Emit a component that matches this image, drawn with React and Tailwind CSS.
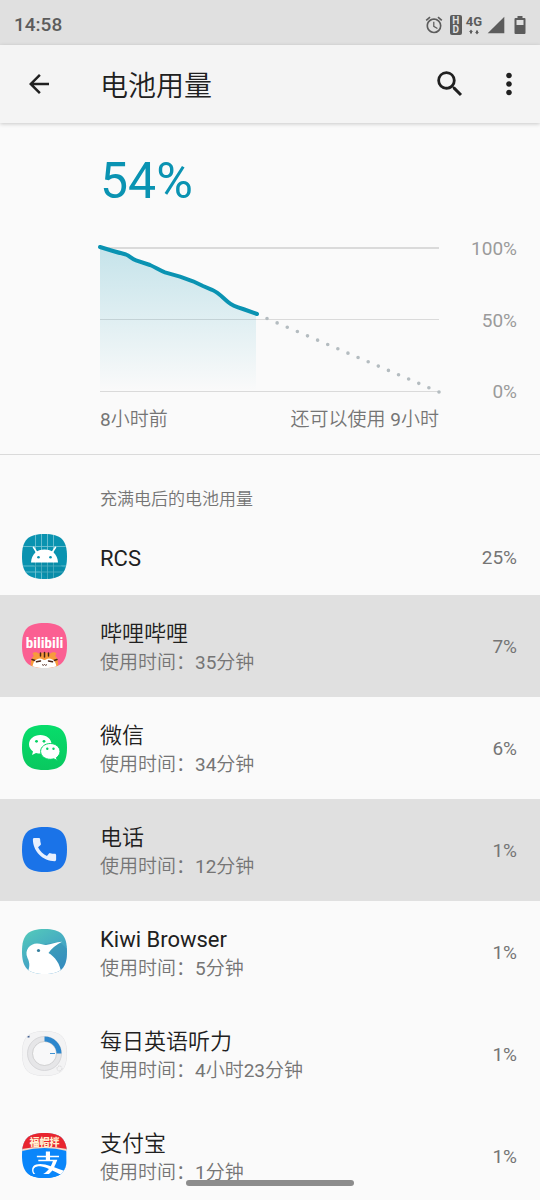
import React from 'react';
import { MdAlarm, MdArrowBack, MdCall, MdMoreVert, MdSearch, MdSignalCellular4Bar } from 'react-icons/md';
import { FaAlipay } from 'react-icons/fa';

const SQUIRCLE = 'M22.5 0C39 0 45 6 45 22.5S39 45 22.5 45 0 39 0 22.5 6 0 22.5 0Z';

function AppIcon({ id, children }) {
  return (
    <svg viewBox="0 0 45 45" className="w-[45px] h-[45px] mb-0.5 shrink-0" aria-hidden="true">
      <clipPath id={`clip-${id}`}>
        <path d={SQUIRCLE} />
      </clipPath>
      <g clipPath={`url(#clip-${id})`}>{children}</g>
    </svg>
  );
}

function RcsIcon() {
  return (
    <AppIcon id="rcs">
      <rect width="45" height="45" fill="#0a93b0" />
      <path
        d="M13.5 0V45M19.5 0V45M25.5 0V45M31.5 0V45M0 12.5H45M0 32H45M0 38H45"
        stroke="#7cc6d6"
        strokeWidth="0.8"
        fill="none"
      />
      <path d="M9 28.500h27l9 9V45H26Z" fill="#06809b" opacity="0.35" />
      <path d="M9 28.500C9.500 20 15 15.500 22.500 15.500S35.500 20 36 28.500Z" fill="#fff" />
      <path d="M14.500 18 11.500 13.300M30.500 18 33.500 13.300" stroke="#fff" strokeWidth="1.600" strokeLinecap="round" />
      <circle cx="16.500" cy="23.300" r="1.300" fill="#0a93b0" />
      <circle cx="28.500" cy="23.300" r="1.300" fill="#0a93b0" />
    </AppIcon>
  );
}

function BilibiliIcon() {
  return (
    <AppIcon id="bili">
      <rect width="45" height="45" fill="#fb5f92" />
      <text
        x="22.500"
        y="25"
        textAnchor="middle"
        fontSize="15"
        fontWeight="700"
        fill="#fff"
        className="font-['Roboto_Condensed',Roboto,sans-serif]"
      >
        bilibili
      </text>
      <path d="M9 45C8 38 10 34 12 33L10.500 30.500C12 28.800 15 29 16.500 30.500 20 29.300 25 29.300 28.500 30.500 30 29 33 28.800 34.500 30.500L33 33C35 34 37 38 36 45Z" fill="#f79a3c" />
      <path d="M22.500 29.500V34M18.500 30V33M26.500 30V33M10 36.500 13 37.500M35 36.500 32 37.500" stroke="#4a2417" strokeWidth="1.500" strokeLinecap="round" />
      <path d="M10.500 45C10.500 39 14 35.500 18 35.500 20 35.500 21 37 22.500 37S25 35.500 27 35.500C31 35.500 34.500 39 34.500 45Z" fill="#fff" />
      <path d="M14.500 38.800 18.500 38M26.500 38 30.500 38.800" stroke="#4a2417" strokeWidth="1.500" strokeLinecap="round" />
      <path d="M20 41.500Q21.300 43.200 22.500 41.500 23.700 43.200 25 41.500" stroke="#4a2417" strokeWidth="0.900" fill="none" />
    </AppIcon>
  );
}

function WechatIcon() {
  return (
    <AppIcon id="wechat">
      <linearGradient id="wechat-bg" x1="0" y1="0" x2="0" y2="1">
        <stop offset="0" stopColor="#07dd6b" />
        <stop offset="1" stopColor="#09c85f" />
      </linearGradient>
      <rect width="45" height="45" fill="url(#wechat-bg)" />
      <path d="M18.300 10C12 10 7 14 7 19.300c0 3 1.600 5.500 4 7.200l-1 3.500 4-2.100c1.400.4 2.800.6 4.300.6 6.300 0 11.300-4 11.300-9.200S24.600 10 18.300 10Z" fill="#fff" />
      <path d="M28.300 18.500c-5.400 0-9.700 3.500-9.700 7.900s4.300 7.900 9.700 7.900c1.200 0 2.400-.2 3.500-.5l3.500 1.700-.9-2.900c2.200-1.500 3.600-3.700 3.600-6.200 0-4.400-4.300-7.900-9.700-7.900Z" fill="#fff" stroke="#08d265" strokeWidth="1" />
      <circle cx="14.500" cy="16.300" r="1.400" fill="#08d265" />
      <circle cx="22" cy="16.300" r="1.400" fill="#08d265" />
      <circle cx="25.300" cy="23.800" r="1.200" fill="#08d265" />
      <circle cx="31.500" cy="23.800" r="1.200" fill="#08d265" />
    </AppIcon>
  );
}

function PhoneIcon() {
  return (
    <AppIcon id="phone">
      <rect width="45" height="45" fill="#1a73e8" />
      <MdCall x="7" y="7" size={31} color="#e8f0fe" />
    </AppIcon>
  );
}

function KiwiIcon() {
  return (
    <AppIcon id="kiwi">
      <linearGradient id="kiwi-bg" x1="0" y1="0" x2="0.600" y2="1">
        <stop offset="0" stopColor="#55ccba" />
        <stop offset="1" stopColor="#3a93c8" />
      </linearGradient>
      <rect width="45" height="45" fill="url(#kiwi-bg)" />
      <path d="M22 15 38 13 45 20V45H37Z" fill="#2f83ad" opacity="0.350" />
      <path d="M5 45C8 38 8 34 5.500 29 2 21 8 14.500 15 14.500 19 14.500 21 16 24 16 29 15.500 34 13 40 12.800 34 16 29 20 26.500 24 33 28 38 34 39.500 45Z" fill="#fff" />
      <circle cx="16.500" cy="21.500" r="1.600" fill="#37809f" />
    </AppIcon>
  );
}

function ListeningIcon() {
  return (
    <AppIcon id="listening">
      <path d={SQUIRCLE} fill="#f3f3f4" stroke="#e2e2e4" strokeWidth="1" />
      <circle cx="22.500" cy="22.500" r="14.500" fill="none" stroke="#e6e6e8" strokeWidth="5" />
      <circle cx="22.500" cy="22.500" r="17" fill="none" stroke="#cfcfd1" strokeWidth="0.700" />
      <circle cx="22.500" cy="22.500" r="12" fill="#f8f8f9" stroke="#c0c0c2" strokeWidth="0.700" />
      <path d="M22.500 8A14.500 14.500 0 0 1 37 22.500" fill="none" stroke="#2d87cd" strokeWidth="5" />
      <path d="M28 22.500H33" stroke="#2d87cd" strokeWidth="0.900" />
      <path d="M5.500 6.500V5.500L7.500 4.500V6.500Z" fill="#3b5a8c" />
      <circle cx="37.500" cy="37.500" r="2.500" fill="none" stroke="#d2d2d4" strokeWidth="1" strokeDasharray="1.500 1" />
    </AppIcon>
  );
}

function AlipayIcon() {
  return (
    <AppIcon id="alipay">
      <rect width="45" height="45" fill="#0a86fa" />
      <rect x="9" y="17" width="36" height="24" fill="#fff" />
      <FaAlipay x="5" y="11" size={42} color="#0a86fa" />
      <path d="M0 0H45V18Q22.500 12 0 18Z" fill="#f7d9c8" />
      <path d="M0 0H45V16Q22.500 11.500 0 16Z" fill="#e8252f" />
      <text
        x="22.500"
        y="13"
        textAnchor="middle"
        fontSize="10"
        fontWeight="900"
        fill="#fff0d0"
        className="font-['Noto_Sans_CJK_SC',sans-serif]"
      >
        福帽拌
      </text>
    </AppIcon>
  );
}

const apps = [
  { name: '哔哩哔哩', time: '35分钟', percent: '7%', icon: BilibiliIcon, active: true },
  { name: '微信', time: '34分钟', percent: '6%', icon: WechatIcon },
  { name: '电话', time: '12分钟', percent: '1%', icon: PhoneIcon, active: true },
  { name: 'Kiwi Browser', time: '5分钟', percent: '1%', icon: KiwiIcon },
  { name: '每日英语听力', time: '4小时23分钟', percent: '1%', icon: ListeningIcon },
  { name: '支付宝', time: '1分钟', percent: '1%', icon: AlipayIcon },
];

function StatusBar() {
  return (
    <div className="flex items-center justify-between h-[45px] shrink-0 pl-3.5 pr-3.5 pt-1 bg-[#e0e0e0] text-[#5c5c5c]">
      <span className="text-[19px] leading-6 font-medium">14:58</span>
      <div className="flex items-center gap-1">
        <MdAlarm className="w-5 h-5" />
        <div className="flex flex-col items-center justify-center w-3 h-5 ml-0.5 rounded-xs bg-[#5c5c5c] text-[#e0e0e0] text-[10px] leading-[9px] font-bold">
          <span>H</span>
          <span>D</span>
        </div>
        <div className="flex flex-col items-center">
          <span className="text-[13px] leading-[14px] font-bold">4G</span>
          <svg viewBox="0 0 12 6" className="w-3 h-1.5">
            <path d="M3 .5 5 3H4V4.500H2V3H1ZM9 5.500 7 3H8V1.500H10V3H11Z" fill="currentColor" />
          </svg>
        </div>
        <MdSignalCellular4Bar className="w-5 h-5" />
        <svg viewBox="0 0 12 18" className="w-3 h-[18px] ml-1">
          <path d="M3.500 0H8.500V2H10.500Q11.500 2 11.500 3V17Q11.500 18 10.500 18H1.500Q.5 18 .5 17V3Q.5 2 1.500 2H3.500ZM2.500 4V9H9.500V4Z" fill="currentColor" fillRule="evenodd" />
        </svg>
      </div>
    </div>
  );
}

function Header() {
  return (
    <header className="relative flex items-center h-[78px] shrink-0 pl-6 pr-3.5 bg-[#f4f4f4] text-[#202020] shadow-[0_1px_4px_rgba(0,0,0,0.2)]">
      <button type="button" aria-label="返回">
        <MdArrowBack className="w-[30px] h-[30px]" />
      </button>
      <h1 className="flex-1 ml-[46px] pt-1.5 text-[28px] leading-9">电池用量</h1>
      <button type="button" aria-label="搜索">
        <MdSearch className="w-[34px] h-[34px]" />
      </button>
      <button type="button" aria-label="更多选项" className="ml-[25px]">
        <MdMoreVert className="w-[34px] h-[34px]" />
      </button>
    </header>
  );
}

function BatteryChart() {
  return (
    <section className="pl-[100px] pr-[23px] pt-8 pb-5 border-b border-[#dadada]">
      <p className="text-[50px] leading-[52px] text-[#0a93b2]">54%</p>
      <div className="flex mt-10">
        <svg viewBox="0 0 339 145" className="flex-1 min-w-0 overflow-visible" role="img" aria-label="电池电量曲线">
          <linearGradient id="level-fill" x1="0" y1="0" x2="0" y2="1">
            <stop offset="0" stopColor="#0a93b2" stopOpacity="0.220" />
            <stop offset="1" stopColor="#0a93b2" stopOpacity="0" />
          </linearGradient>
          <path d="M0 1H339" stroke="#dadada" strokeWidth="2" />
          <path d="M0 72.500H339M0 144.500H339" stroke="#dadada" strokeWidth="1" />
          <path d="M0 0 13 4 27 8 35 13 50 18 65 25 80 29.500 93 34 103 39 115 44 122 49 128 55 135 59 143 62 156 67V144H0Z" fill="url(#level-fill)" />
          <path
            d="M0 0 13 4Q20 6 26 7.500C30 9 31 11.500 36 13.300L50 18C55 20 60 23.500 65 25.300L80 29.700 93 34.300 103 39 112 42.800C119 46 122 50 128 55 132 58.500 138 60.500 143 62L157 67"
            fill="none"
            stroke="#0a93b2"
            strokeWidth="4"
            strokeLinecap="round"
            strokeLinejoin="round"
          />
          <path d="M339 145 161 69" stroke="#b4bcc0" strokeWidth="3.600" strokeLinecap="round" strokeDasharray="0 11" />
        </svg>
        <div className="flex flex-col justify-between w-[78px] -mt-2.5 -mb-3 text-right text-[19px] leading-6 text-[#9b9b9b]">
          <span>100%</span>
          <span>50%</span>
          <span>0%</span>
        </div>
      </div>
      <div className="flex justify-between mt-[13px] -mb-px mr-[78px] text-[19px] leading-[30px] text-[#757575]">
        <span>8小时前</span>
        <span>还可以使用 9小时</span>
      </div>
    </section>
  );
}

function AppRow({ app }) {
  const Icon = app.icon;
  return (
    <li>
      <button
        type="button"
        className={`flex items-center w-full py-5 pl-[22px] pr-[23px] text-left ${app.active ? 'bg-[#e0e0e0]' : ''}`}
      >
        <Icon />
        <span className="flex-1 ml-[33px] pt-1">
          <span className="block text-[22px] leading-[30px] text-[#202020]">{app.name}</span>
          <span className="block text-[19px] leading-7 text-[#757575]">使用时间：{app.time}</span>
        </span>
        <span className="mt-0.5 text-[19px] leading-6 text-[#757575]">{app.percent}</span>
      </button>
    </li>
  );
}

export default function App() {
  return (
    <div className="relative flex flex-col h-screen overflow-hidden bg-[#fafafa] font-[Roboto,'Noto_Sans_CJK_SC_DemiLight','Noto_Sans_CJK_SC',sans-serif]">
      <StatusBar />
      <Header />
      <main className="flex-1 min-h-0 overflow-y-auto [scrollbar-width:none]">
        <BatteryChart />
        <h2 className="pl-[100px] pt-8 pb-[7px] text-[17px] leading-6 text-[#757575]">充满电后的电池用量</h2>
        <ul>
          <li>
            <button type="button" className="flex items-center w-full h-[77px] pt-0.5 pl-[22px] pr-[23px] text-left">
              <RcsIcon />
              <span className="flex-1 ml-[33px] pt-0.5 text-[22px] leading-[30px] text-[#202020]">RCS</span>
              <span className="text-[19px] leading-6 text-[#757575]">25%</span>
            </button>
          </li>
          {apps.map(app => (
            <AppRow key={app.name} app={app} />
          ))}
        </ul>
      </main>
      <div className="absolute bottom-3.5 left-1/2 -translate-x-1/2 w-[168px] h-1.5 rounded-full bg-[#8c8c8c]" />
    </div>
  );
}
